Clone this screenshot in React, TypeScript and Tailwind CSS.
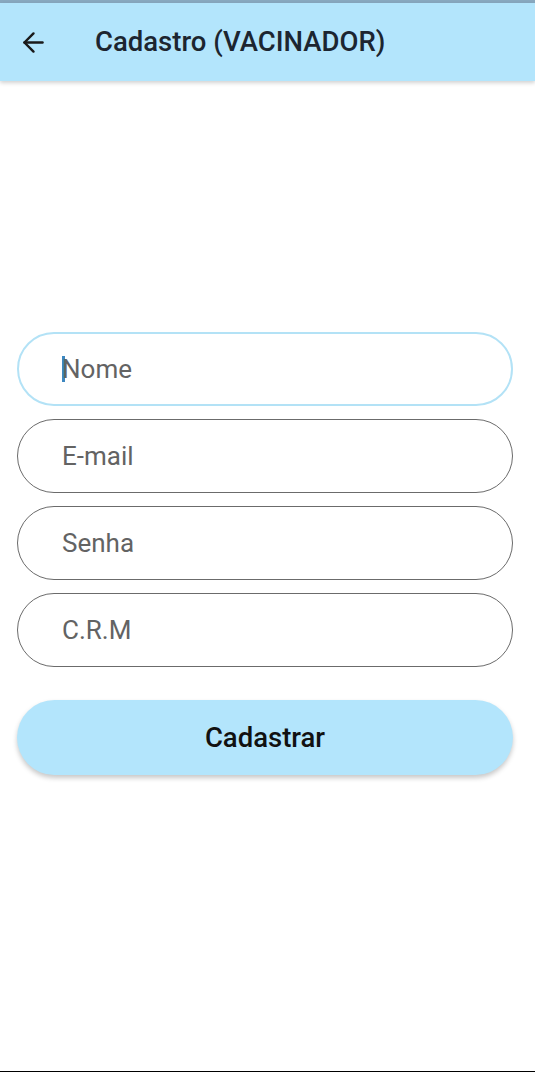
import { ArrowLeft } from "lucide-react";

const fields = ["Nome", "E-mail", "Senha", "C.R.M"];

const App = () => (
  <div className="min-h-[1072px] bg-white flex flex-col font-['Roboto',sans-serif] border-b border-black">
    {/* Status strip + app bar */}
    <div className="h-[3px] bg-[#88a8bf]" />
    <header className="h-[78px] bg-[#b3e5fc] flex items-center pl-[18px] shadow-[0_2px_4px_rgba(0,0,0,0.18)]">
      <ArrowLeft size={31} strokeWidth={1.9} className="text-[#1a1a1a]" />
      <h1 className="ml-[46px] text-[27.5px] font-medium text-[#1c2530] leading-none">
        Cadastro (VACINADOR)
      </h1>
    </header>

    {/* Form */}
    <div className="mt-[251px] pl-[17px] pr-[22px] flex flex-col gap-[13px]">
      {fields.map((f, i) => (
        <div
          key={f}
          className={
            i === 0
              ? "h-[74px] rounded-full border-2 border-[#b3e2f6] flex items-center pl-[43px]"
              : "h-[74px] rounded-full border border-[#6b6b6b] flex items-center pl-[44px]"
          }
        >
          {i === 0 && <span className="w-[3px] h-[26px] bg-[#3d87c0] -mr-[3px]" />}
          <span className="text-[26px] text-[#636363] leading-none">{f}</span>
        </div>
      ))}
    </div>

    <div className="pl-[17px] pr-[22px] mt-[33px]">
      <button className="w-full h-[75px] rounded-full bg-[#b3e5fc] shadow-[0_3px_5px_rgba(0,0,0,0.22)] text-[27.5px] font-medium text-[#111]">
        Cadastrar
      </button>
    </div>
  </div>
);

export default App;
